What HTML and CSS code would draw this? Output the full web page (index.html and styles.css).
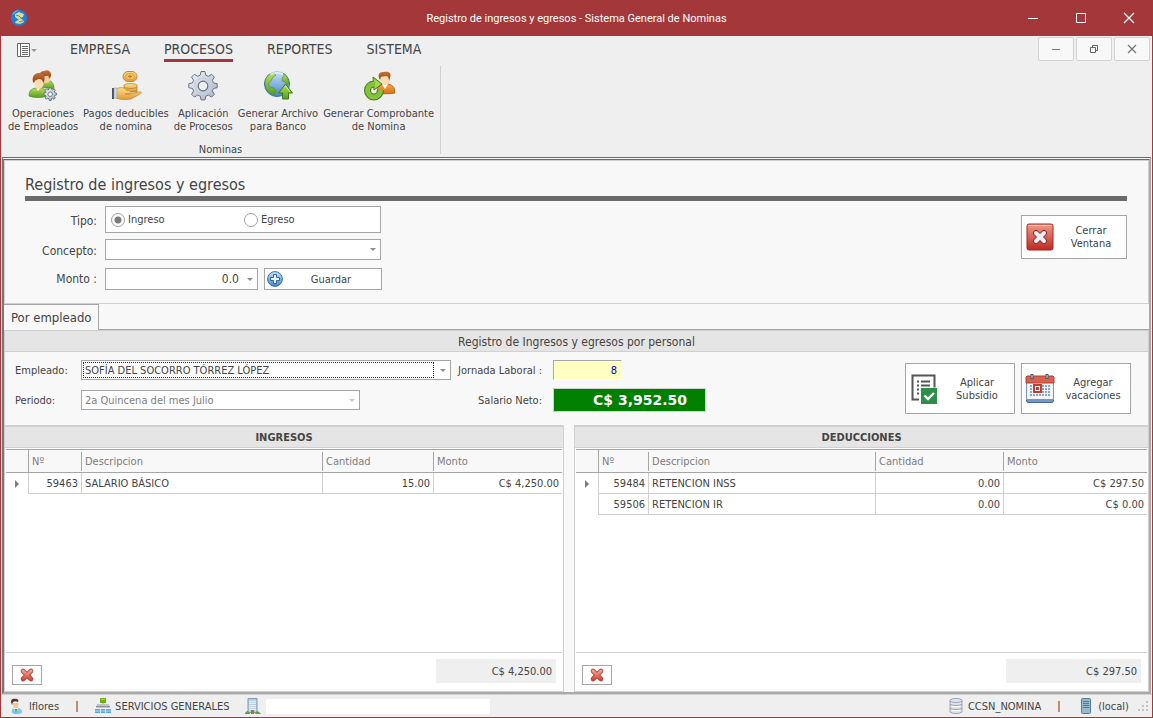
FILE: index.html
```html
<!DOCTYPE html>
<html lang="es">
<head>
    <meta charset="utf-8">
    <title>Registro de ingresos y egresos - Sistema General de Nominas</title>
    <link rel="stylesheet" href="styles.css">
</head>
<body>
    <svg class="defs" width="0" height="0" aria-hidden="true">
        <defs>
            <linearGradient id="gBlue" x1="0" y1="0" x2="0" y2="1"><stop offset="0" stop-color="#c6e3f8"/><stop offset="1" stop-color="#4585c8"/></linearGradient>
            <linearGradient id="gGreen" x1="0" y1="0" x2="0" y2="1"><stop offset="0" stop-color="#b9de62"/><stop offset="1" stop-color="#559f20"/></linearGradient>
            <linearGradient id="gGold" x1="0" y1="0" x2="0" y2="1"><stop offset="0" stop-color="#fde08a"/><stop offset="1" stop-color="#dd9a3a"/></linearGradient>
            <linearGradient id="gSteel" x1="0" y1="0" x2="1" y2="1"><stop offset="0" stop-color="#f2f5f9"/><stop offset="1" stop-color="#a2afc1"/></linearGradient>
            <linearGradient id="gRed" x1="0" y1="0" x2="0" y2="1"><stop offset="0" stop-color="#f09a88"/><stop offset="1" stop-color="#bd2a23"/></linearGradient>
            <linearGradient id="gHair" x1="0" y1="0" x2="0" y2="1"><stop offset="0" stop-color="#c9703a"/><stop offset="1" stop-color="#8a4215"/></linearGradient>
            <linearGradient id="gOrange" x1="0" y1="0" x2="0" y2="1"><stop offset="0" stop-color="#f9a545"/><stop offset="1" stop-color="#d8701a"/></linearGradient>
            <linearGradient id="gCross" gradientUnits="userSpaceOnUse" x1="0" y1="2" x2="0" y2="14"><stop offset="0" stop-color="#f7b3a2"/><stop offset="1" stop-color="#d23b2c"/></linearGradient>
            <path id="gear" d="M14 1.500h4l.8 3.700 2.600 1.100 3.200-2 2.800 2.800-2 3.200 1.100 2.600 3.700.8v4l-3.700.8-1.100 2.600 2 3.200-2.800 2.800-3.200-2-2.600 1.100-.8 3.700h-4l-.8-3.700-2.600-1.100-3.200 2-2.800-2.800 2-3.200-1.100-2.600-3.700-.8v-4l3.700-.8 1.100-2.600-2-3.200 2.800-2.800 3.200 2 2.600-1.100z"/>
            <symbol id="cross" viewBox="0 0 16 16"><path d="M4 4l8 8M12 4l-8 8" stroke="#b3403a" stroke-width="4.600" stroke-linecap="round"/><path d="M4 4l8 8M12 4l-8 8" stroke="url(#gCross)" stroke-width="3" stroke-linecap="round"/></symbol>
        </defs>
    </svg>

    <div class="window">
        <header class="titlebar">
            <svg class="app-icon" width="16" height="16" viewBox="0 0 16 16">
                <circle cx="8" cy="8" r="8" fill="#1c7fdc"/>
                <path d="M1 5a8 8 0 0 1 8-5c-3 1-5 2-6 4z" fill="#56bdf5"/>
                <path d="M4 4l4-2 5 2-1 3-3 1 3 2 1 2-4 2-5-1 1-2 3-1-4-3z" fill="#d8d99a"/>
                <path d="M5 5l3 1 2 2M8 12l4-1" stroke="#5d9a66" fill="none"/>
            </svg>
            <h1 class="caption">Registro de ingresos y egresos - Sistema General de Nominas</h1>
            <div class="window-buttons">
                <button type="button" aria-label="Minimizar"><svg width="12" height="12" viewBox="0 0 12 12"><path d="M1 6.500h10" stroke="#fff"/></svg></button>
                <button type="button" aria-label="Maximizar"><svg width="12" height="12" viewBox="0 0 12 12"><path d="M1.500 1.500h9v9h-9z" fill="none" stroke="#fff"/></svg></button>
                <button type="button" aria-label="Cerrar"><svg width="12" height="12" viewBox="0 0 12 12"><path d="M1 1l10 10M11 1L1 11" stroke="#fff" stroke-width="1.300"/></svg></button>
            </div>
        </header>

        <nav class="ribbon">
            <div class="ribbon-top">
                <button type="button" class="file-menu" aria-label="Menu">
                    <svg width="20" height="14" viewBox="0 0 20 14"><path d="M.5.500h12v13H.5zM3.500.500v13" fill="#fff" stroke="#666"/><path d="M5 3.500h6M5 5.500h6M5 7.500h6M5 9.500h6M5 11.500h6" stroke="#666"/><path d="M14 6h6l-3 3z" fill="#999"/></svg>
                </button>
                <div class="ribbon-tabs">
                    <button type="button">EMPRESA</button>
                    <button type="button" class="active">PROCESOS</button>
                    <button type="button">REPORTES</button>
                    <button type="button">SISTEMA</button>
                </div>
                <div class="child-buttons">
                    <button type="button" aria-label="Minimizar ventana"><svg width="10" height="10" viewBox="0 0 10 10"><path d="M1 5.500h8" stroke="#777"/></svg></button>
                    <button type="button" aria-label="Restaurar ventana"><svg width="10" height="10" viewBox="0 0 10 10"><path d="M1.500 3.500h5v5h-5zM3.500 3.500v-2h5v5h-2" fill="none" stroke="#666"/></svg></button>
                    <button type="button" aria-label="Cerrar ventana hija"><svg width="10" height="10" viewBox="0 0 10 10"><path d="M1 1l8 8M9 1L1 9" stroke="#777" stroke-width="1.300"/></svg></button>
                </div>
            </div>
            <div class="ribbon-group">
                <div class="ribbon-items">
                    <button type="button">
                        <svg width="32" height="32" viewBox="0 0 32 32">
                            <path d="M12 17c1-5 4-7 8-7s7 3 7 9z" fill="url(#gGreen)" stroke="#4a7d1c" stroke-width=".6"/>
                            <path d="M14 5c0 6 2 8 5 8s5-3 5-8z" fill="#f6cf9c"/>
                            <path d="M13 6c-1-4 2-5 4-5 4-2 8 1 7 5l-2 3c0-3-1-4-3-3-3 1-4 0-6 0z" fill="url(#gHair)"/>
                            <path d="M2 26c0-6 3-8 9-8s9 2 9 8c-5 2-13 2-18 0z" fill="url(#gGreen)" stroke="#4a7d1c" stroke-width=".6"/>
                            <path d="M9 17l2 4 3-4z" fill="#fff"/>
                            <path d="M7 10c0 6 2 9 5 9s5-3 5-9z" fill="#fbdcb0"/>
                            <path d="M6 12c-1-4 0-8 5-9 5 0 8 2 6 9l-1 1c0-3-2-4-4-4-3 1-4 1-5 4z" fill="url(#gHair)"/>
                            <g transform="translate(16 17) scale(.45)"><use href="#gear" fill="url(#gSteel)" stroke="#5f6b7e" stroke-width="2"/><circle cx="16" cy="16" r="5" fill="#fff" stroke="#5f6b7e" stroke-width="2"/></g>
                        </svg>
                        <span>Operaciones<br>de Empleados</span>
                    </button>
                    <button type="button">
                        <svg width="32" height="32" viewBox="0 0 32 32">
                            <path d="M14 22h13v-7c-3-2-10-2-13 0z" fill="url(#gGold)" stroke="#c4862e" stroke-width=".8"/>
                            <path d="M14 17c3 2 10 2 13 0M14 20c3 2 10 2 13 0" fill="none" stroke="#c4862e"/>
                            <rect x="13" y="1.500" width="14" height="10" rx="5" fill="url(#gGold)" stroke="#c98a31"/>
                            <rect x="15.500" y="3.500" width="9" height="6" rx="3" fill="#f1bc5c" stroke="#d59c42" stroke-width=".8"/>
                            <path d="M18 6.500h4M20 5v3" stroke="#b97c26"/>
                            <path d="M6 19c4-2 8-2 10 1l4 1c2 1 1 3-1 3h-4l6 0 8-2c3-.5 3 1 1 2l-9 5c-5 1-10 1-15-1z" fill="url(#gGold)" stroke="#c98b3b" stroke-width=".8"/>
                            <path d="M2 18h2v11H2z" fill="#4b5058"/><path d="M4 18h3v10H4z" fill="#d4dae3" stroke="#8f98a6" stroke-width=".6"/>
                        </svg>
                        <span>Pagos deducibles<br>de nomina</span>
                    </button>
                    <button type="button">
                        <svg width="32" height="32" viewBox="0 0 32 32"><use href="#gear" fill="url(#gSteel)" stroke="#66738a"/><circle cx="16" cy="16" r="8" fill="none" stroke="#c7d0dc" stroke-width="1.500"/><circle cx="16" cy="16" r="4.800" fill="#efefef" stroke="#66738a" stroke-width="1.200"/></svg>
                        <span>Aplicación<br>de Procesos</span>
                    </button>
                    <button type="button">
                        <svg width="32" height="32" viewBox="0 0 32 32">
                            <circle cx="15" cy="14" r="12.500" fill="url(#gBlue)" stroke="#3570a8"/>
                            <path d="M3 12c1-5 4-9 9-9l2 2-3 2-2 4-3 3 2 3 4 1 2 3-2 4c-6-2-9-7-9-13z" fill="url(#gGreen)" stroke="#568f29" stroke-width=".6"/>
                            <path d="M22 4c3 2 5 6 5 10l-2 1-2-3-3-1v-3l2-2z" fill="url(#gGreen)" stroke="#568f29" stroke-width=".6"/>
                            <path d="M8 4c4-2 9-3 13 0" stroke="#fff" stroke-width="3" fill="none" opacity=".6"/>
                            <path d="M23.500 14l7 9h-4v6h-6v-6h-4z" fill="url(#gGreen)" stroke="#3b7d18"/>
                            <path d="M23.500 16l4.500 6" stroke="#d8f0a0" fill="none"/>
                        </svg>
                        <span>Generar Archivo<br>para Banco</span>
                    </button>
                    <button type="button">
                        <svg width="32" height="32" viewBox="0 0 32 32">
                            <path d="M14 23c0-6 3-9 9-9s9 3 9 9c-5 1-13 1-18 0z" fill="url(#gOrange)" stroke="#a95113" stroke-width=".8"/>
                            <path d="M19 14l3 5 3-5z" fill="#fff"/>
                            <path d="M17 6c0 6 2 9 5 9s5-3 5-9z" fill="#fbdcb0"/>
                            <path d="M16 8c-1-4 0-6 5-6 5-1 8 1 6 6l-1 3c0-3-1-5-3-5-3 1-4 0-5 1l-1 3z" fill="url(#gHair)"/>
                            <path d="M11 14a6.500 6.500 0 1 0 6.500 6.500" fill="none" stroke="#3d7c19" stroke-width="7"/>
                            <path d="M10 7l9 7-8 6z" fill="#a4d350" stroke="#3d7c19"/>
                            <path d="M12 14a6.500 6.500 0 1 0 5.500 6" fill="none" stroke="#86c23c" stroke-width="5"/>
                        </svg>
                        <span>Generar Comprobante<br>de Nomina</span>
                    </button>
                </div>
                <div class="group-name">Nominas</div>
            </div>
        </nav>

        <main class="child">
            <form class="entry">
                <h2>Registro de ingresos y egresos</h2>
                <div class="entry-body">
                    <div class="entry-fields">
                        <span class="entry-label" id="tipo">Tipo:</span>
                        <div class="radio-box" role="radiogroup" aria-labelledby="tipo">
                            <label><input type="radio" name="tipo" checked>Ingreso</label>
                            <label><input type="radio" name="tipo">Egreso</label>
                        </div>
                        <label class="entry-label" for="concepto">Concepto:</label>
                        <div class="combo">
                            <select id="concepto"><option></option></select>
                            <span class="arrow"></span>
                        </div>
                        <label class="entry-label" for="monto">Monto :</label>
                        <div class="amount-row">
                            <div class="combo amount">
                                <input type="text" id="monto" value="0.0">
                                <span class="arrow"></span>
                            </div>
                            <button type="button" class="btn save">
                                <svg width="16" height="16" viewBox="0 0 16 16"><circle cx="8" cy="8" r="7.400" fill="url(#gBlue)" stroke="#3a6fad"/><path d="M6.500 3.500h3v3h3v3h-3v3h-3v-3h-3v-3h3z" fill="#eaf4fc" stroke="#2e66a8"/></svg>
                                <span>Guardar</span>
                            </button>
                        </div>
                    </div>
                    <button type="button" class="btn close-btn">
                        <svg width="28" height="28" viewBox="0 0 28 28"><rect x="1" y="1" width="26" height="26" rx="2" fill="url(#gRed)" stroke="#a9241f"/><path d="M2.500 2.500h23" stroke="#f7c5ba"/><path d="M10 10l8 8M18 10l-8 8" stroke="#96302e" stroke-width="6" stroke-linecap="round"/><path d="M10 10l8 8M18 10l-8 8" stroke="#e9eef8" stroke-width="4" stroke-linecap="round"/></svg>
                        <span>Cerrar<br>Ventana</span>
                    </button>
                </div>
            </form>

            <div class="tabs"><button type="button" class="tab">Por empleado</button></div>

            <section class="page">
                <h3 class="page-title">Registro de Ingresos y egresos por personal</h3>
                <div class="employee">
                    <div class="employee-fields">
                        <label for="empleado">Empleado:</label>
                        <div class="combo focused">
                            <select id="empleado"><option>SOFÍA DEL SOCORRO TÓRREZ LÓPEZ</option></select>
                            <span class="arrow"></span>
                        </div>
                        <label class="right" for="jornada">Jornada Laboral :</label>
                        <input type="text" class="hours" id="jornada" value="8">
                        <label for="periodo">Periodo:</label>
                        <div class="combo disabled">
                            <select id="periodo" disabled><option>2a Quincena del mes Julio</option></select>
                            <span class="arrow"></span>
                        </div>
                        <label class="right" for="neto">Salario Neto:</label>
                        <input type="text" class="net" id="neto" value="C$ 3,952.50" readonly>
                    </div>
                    <div class="employee-actions">
                        <button type="button" class="btn">
                            <svg width="30" height="32" viewBox="0 0 30 32"><path d="M10 26.500H3.500v-24h22v12" fill="none" stroke="#555" stroke-width="2"/><path d="M8 8.500h2M8 12.500h2M8 16.500h2M8 20.500h2M12 8.500h9M12 12.500h9M12 16.500h3" stroke="#555" stroke-width="2"/><path d="M12 15h16v16H12z" fill="#2e8f48"/><path d="M15.500 22.500l3.500 3.500 6-6" fill="none" stroke="#fff" stroke-width="2.400"/></svg>
                            <span>Aplicar<br>Subsidio</span>
                        </button>
                        <button type="button" class="btn">
                            <svg width="30" height="32" viewBox="0 0 30 32">
                                <path d="M1.500 26v2l1 1.500h25l1-1.500v-2z" fill="#7896c4" stroke="#4568a3"/>
                                <path d="M1.500 4.500h27v22h-27z" fill="#f3f5fa" stroke="#7a95c4"/>
                                <path d="M1 10V4l1-1h26l1 1v6z" fill="#d9604e" stroke="#ad4234"/>
                                <path d="M7 1v5M22 1v5" stroke="#4f5664" stroke-width="3"/><path d="M7 2v3M22 2v3" stroke="#d4dae6"/>
                                <path d="M5 13h20M5 16h20M5 19h20M5 22h20" stroke="#8fa4cc" stroke-width="2" stroke-dasharray="2 1"/>
                                <path d="M9 12h7v7H9z" fill="#fff" stroke="#c13f30" stroke-width="2"/><path d="M11 14h3v3h-3z" fill="#c13f30"/>
                            </svg>
                            <span>Agregar<br>vacaciones</span>
                        </button>
                    </div>
                </div>

                <div class="split">
                    <section class="panel income">
                        <h4>INGRESOS</h4>
                        <div class="grid-area">
                            <table>
                                <colgroup><col class="c-mark"><col class="c-num"><col><col class="c-qty"><col class="c-amount"></colgroup>
                                <thead>
                                    <tr><th></th><th>Nº</th><th>Descripcion</th><th>Cantidad</th><th>Monto</th></tr>
                                </thead>
                                <tbody>
                                    <tr><td><i class="mark"></i></td><td class="num">59463</td><td>SALARIO BÁSICO</td><td class="num">15.00</td><td class="num">C$ 4,250.00</td></tr>
                                </tbody>
                            </table>
                        </div>
                        <div class="panel-foot">
                            <button type="button" class="btn del" aria-label="Eliminar ingreso"><svg width="16" height="16"><use href="#cross"/></svg></button>
                            <output class="total">C$ 4,250.00</output>
                        </div>
                    </section>
                    <section class="panel deductions">
                        <h4>DEDUCCIONES</h4>
                        <div class="grid-area">
                            <table>
                                <colgroup><col class="c-mark"><col class="c-num"><col><col class="c-qty"><col class="c-amount"></colgroup>
                                <thead>
                                    <tr><th></th><th>Nº</th><th>Descripcion</th><th>Cantidad</th><th>Monto</th></tr>
                                </thead>
                                <tbody>
                                    <tr><td><i class="mark"></i></td><td class="num">59484</td><td>RETENCION INSS</td><td class="num">0.00</td><td class="num">C$ 297.50</td></tr>
                                    <tr><td></td><td class="num">59506</td><td>RETENCION IR</td><td class="num">0.00</td><td class="num">C$ 0.00</td></tr>
                                </tbody>
                            </table>
                        </div>
                        <div class="panel-foot">
                            <button type="button" class="btn del" aria-label="Eliminar deduccion"><svg width="16" height="16"><use href="#cross"/></svg></button>
                            <output class="total">C$ 297.50</output>
                        </div>
                    </section>
                </div>
            </section>
        </main>

        <footer class="statusbar">
            <svg width="16" height="16" viewBox="0 0 16 16"><path d="M4 5c0 4 1 5 3 5s3-2 2-5z" fill="#f4c896"/><path d="M2 4c0-3 2-4 4-3 3-1 4 2 3 3-2-1-3-1-5 0l-1 3z" fill="#5a3418"/><path d="M3 15c-1-4 1-5 4-5 4 0 6 1 6 5-3 1.500-8 1.500-10 0z" fill="#7cc8f0"/><path d="M5 10l2 5 2-5z" fill="#fff"/><path d="M6 11h2l-1 5z" fill="#2c8f3c"/></svg>
            <span class="user">lflores</span>
            <span class="divider"></span>
            <svg width="16" height="16" viewBox="0 0 16 16"><path d="M5 0h6v5H5z" fill="#6fae12"/><path d="M6 1h4v1H6z" fill="#a9dd3f"/><path d="M8 5v2" stroke="#8b9097"/><path d="M2 6h12l1 4H1z" fill="#c1c4c9"/><path d="M1 8.500h14" stroke="#8b9097"/><path d="M0 11h5v4H0zM6 11h4v4H6zM11 11h5v4h-5z" fill="#4fa9e3"/><path d="M0 13h16" stroke="#b7def6"/></svg>
            <span class="dept">SERVICIOS GENERALES</span>
            <svg width="16" height="16" viewBox="0 0 16 16"><path d="M3 .5h9v14H3z" fill="#b9cfe6" stroke="#8398b0"/><path d="M4 3.500h7M4 5.500h7M4 7.500h7M4 9.500h7M4 11.500h7" stroke="#eaf3fb"/><path d="M6 12h3v4H6z" fill="#a8723a"/><path d="M0 15l2-2 2 1 1 2H0zM10 16l2-3 2 1 2 2z" fill="#5aa02c"/></svg>
            <span class="blank"></span>
            <span class="spacer"></span>
            <svg width="14" height="16" viewBox="0 0 14 16"><path d="M1 2v12c2 2 10 2 12 0V2c-2-2-10-2-12 0z" fill="#dfe3ea" stroke="#9aa3b2"/><path d="M1 3c2 2 10 2 12 0M1 6c2 2 10 2 12 0M1 10c2 2 10 2 12 0" fill="none" stroke="#9aa3b2"/><path d="M3 8.500h8M3 12.500h8" stroke="#fff"/></svg>
            <span class="db">CCSN_NOMINA</span>
            <span class="divider"></span>
            <svg class="server-icon" width="10" height="16" viewBox="0 0 10 16"><rect x=".5" y=".5" width="9" height="15" rx="1" fill="#98b8cd" stroke="#567a93"/><path d="M2 3.500h6M2 5.500h6M2 7.500h6M2 9.500h6" stroke="#527892"/></svg>
            <span>(local)</span>
            <svg class="grip" width="12" height="12" viewBox="0 0 12 12"><path d="M8 0h2v2H8zM4 4h2v2H4zM8 4h2v2H8zM0 8h2v2H0zM4 8h2v2H4zM8 8h2v2H8z" fill="#c3c3c3"/></svg>
        </footer>
    </div>
</body>
</html>
```

FILE: styles.css
```css
* {
  box-sizing: border-box;
}
body {
  margin: 0;
  font-family: "DejaVu Sans Condensed", "Noto Sans", sans-serif;
  font-size: 11px;
  line-height: 13px;
  color: #444;
}
button,
input,
select {
  font: inherit;
  color: inherit;
}
h1, h2, h3, h4 {
  margin: 0;
  font-weight: normal;
}
svg {
  display: block;
  flex: none;
}
.defs {
  position: absolute;
}
.window {
  display: flex;
  flex-direction: column;
  min-height: 100vh;
  border: 1px solid #a4373a;
  border-top: none;
  background: #efefef;
}

/* title bar */
.titlebar {
  display: grid;
  grid-template-columns: 143px 1fr 143px;
  align-items: center;
  height: 36px;
  background: #a4373a;
  color: #fff;
}
.app-icon {
  margin-left: 10px;
}
.caption {
  text-align: center;
  font-family: Roboto, sans-serif;
  font-size: 11px;
}
.window-buttons {
  display: flex;
}
.window-buttons button {
  display: flex;
  flex: none;
  align-items: center;
  justify-content: center;
  width: 48px;
  height: 36px;
  padding: 0;
  border: none;
  background: none;
}

/* ribbon */
.ribbon {
  height: 121px;
}
.ribbon-top {
  display: flex;
  height: 30px;
}
.file-menu {
  width: 53px;
  padding: 0 0 2px 16px;
  border: none;
  background: none;
}
.ribbon-tabs {
  display: flex;
  flex: 1;
  gap: 34px;
  padding-left: 16px;
}
.ribbon-tabs button {
  height: 26px;
  padding: 4px 0 0;
  border: none;
  border-bottom: 3px solid transparent;
  background: none;
  font-size: 14px;
}
.ribbon-tabs .active {
  border-bottom-color: #a4373a;
}
.child-buttons {
  display: flex;
  gap: 2px;
  padding: 1px 2px 0 0;
}
.child-buttons button {
  display: flex;
  align-items: center;
  justify-content: center;
  width: 36px;
  height: 24px;
  padding: 0;
  border: 1px solid #d2d2d2;
  border-radius: 2px;
  background: #f8f8f8;
}
.ribbon-group {
  width: max-content;
  height: 88px;
  border-right: 1px solid #d0d0d0;
}
.ribbon-items {
  display: flex;
  gap: 5px;
  padding: 4px 6px 0 7px;
}
.ribbon-items button {
  display: flex;
  flex-direction: column;
  align-items: center;
  gap: 5px;
  height: 73px;
  padding: 0;
  border: none;
  background: none;
}
.group-name {
  text-align: center;
}

/* child window */
.child {
  display: flex;
  flex: 1;
  flex-direction: column;
  margin: 0 1px;
  border: 2px solid #aaa;
  border-top: 3px double #6a6a6a;
  border-left: 2px solid #777;
  background: #f8f8f8;
}
.entry {
  height: 144px;
  padding: 16px 21px 0 20px;
  border: 1px solid #d0d0d0;
}
.entry h2 {
  padding-bottom: 3px;
  border-bottom: 5px solid #6a6a6a;
  font-size: 16px;
  line-height: 16px;
}
.entry-body {
  display: flex;
  align-items: flex-start;
  justify-content: space-between;
  padding-top: 5px;
}
.entry-fields {
  display: grid;
  grid-template-columns: 72px 277px;
  column-gap: 8px;
  row-gap: 6px;
  align-items: center;
}
.entry-label {
  padding-top: 3px;
  text-align: right;
  font-size: 12px;
}
.radio-box {
  display: flex;
  align-items: center;
  height: 27px;
  margin-right: 1px;
  padding-left: 5px;
  border: 1px solid #a5a5a5;
  background: #fff;
}
.radio-box label {
  display: flex;
  align-items: center;
  gap: 3px;
  width: 133px;
}
.radio-box input {
  appearance: none;
  width: 14px;
  height: 14px;
  margin: 0;
  border: 1px solid #a0a0a0;
  border-radius: 50%;
  background: #fff;
}
.radio-box input:checked {
  background: radial-gradient(circle, #7a7a7a 3px, #fff 4px);
}
.combo {
  display: flex;
  height: 21px;
  margin-right: 1px;
  border: 1px solid #a5a5a5;
  background: #fff;
}
.combo select,
.combo input {
  flex: 1;
  appearance: none;
  min-width: 0;
  padding: 0 3px;
  border: none;
  outline: none;
  background: none;
}
.arrow {
  align-self: center;
  width: 6px;
  margin: 0 4px 0 5px;
  border: 3px solid transparent;
  border-top-color: #8c8c8c;
  border-bottom: none;
}
.amount-row {
  display: flex;
  gap: 6px;
  padding-top: 2px;
}
.amount {
  width: 153px;
  height: 22px;
  margin: 0;
}
.amount input {
  text-align: right;
  font-size: 12px;
}
.btn {
  display: flex;
  align-items: center;
  padding: 0 5px;
  border: 1px solid #a5a5a5;
  background: #fff;
}
.btn span {
  flex: 1;
  text-align: center;
}
.save {
  width: 118px;
  height: 22px;
  padding: 0 2px;
}
.close-btn {
  gap: 6px;
  width: 106px;
  height: 44px;
  margin-top: 9px;
  padding: 0 4px;
}

/* tab page */
.tabs {
  position: relative;
  display: flex;
}
.tab {
  height: 26px;
  margin-bottom: -1px;
  padding: 0 7px;
  border: 1px solid #a5a5a5;
  border-width: 1px 1px 0 0;
  background: #f8f8f8;
  font-size: 13px;
}
.page {
  display: flex;
  flex: 1;
  flex-direction: column;
  border-top: 1px solid #a5a5a5;
}
.page-title,
.panel h4 {
  height: 22px;
  padding-top: 1px;
  border: 1px solid #d0d0d0;
  background: #e5e5e5;
  text-align: center;
  line-height: 20px;
}
.page-title {
  font-size: 12px;
}
.employee {
  display: flex;
  justify-content: space-between;
  height: 73px;
  padding: 8px 17px 0 10px;
  border: 1px solid #d0d0d0;
  border-width: 0 1px;
}
.employee-fields {
  display: grid;
  grid-template-columns: 66px 370px 91px 164px;
  grid-template-rows: 20px 24px;
  row-gap: 8px;
  align-items: center;
}
.employee-fields .combo {
  height: 20px;
  margin: 0;
}
.right {
  text-align: right;
}
.focused select {
  border: 1px dotted #333;
  margin: 1px;
  padding: 0 1px;
}
.disabled {
  width: 279px;
}
.disabled select {
  color: #7d7d7d;
  opacity: 1;
}
.disabled .arrow {
  border-top-color: #c8c8c8;
}
.hours {
  width: 69px;
  height: 20px;
  margin-left: 11px;
  padding: 0 4px;
  border: 1px solid;
  border-color: #a5a5a5 #fff #fff #a5a5a5;
  background: #ffffc0;
  color: #0000c0;
  text-align: right;
}
.net {
  width: 153px;
  height: 24px;
  margin-left: 11px;
  padding: 0 18px;
  border: 1px solid #d0d0d0;
  background: #008000;
  color: #fff;
  font-family: "DejaVu Sans", sans-serif;
  font-size: 14px;
  font-weight: bold;
  text-align: right;
}
.employee-actions {
  display: flex;
  gap: 6px;
  padding-top: 3px;
}
.employee-actions .btn {
  gap: 4px;
  width: 110px;
  height: 51px;
  padding: 0 3px;
}

/* grids */
.split {
  display: flex;
  flex: 1;
  gap: 10px;
}
.panel {
  display: flex;
  flex-direction: column;
  min-width: 0;
  border: 1px solid #d0d0d0;
  background: #fff;
}
.income {
  flex: 560;
}
.deductions {
  flex: 575;
}
.panel h4 {
  border-width: 1px 0;
  font-weight: bold;
}
.grid-area {
  flex: 1;
  margin: 1px 1px 0;
  border-bottom: 1px solid #d0d0d0;
}
table {
  width: 100%;
  border-spacing: 0;
  table-layout: fixed;
}
.c-mark {
  width: 23px;
}
.c-num {
  width: 53px;
}
.c-qty {
  width: 111px;
}
.c-amount {
  width: 128px;
}
.deductions .c-num {
  width: 50px;
}
.deductions .c-qty {
  width: 128px;
}
.deductions .c-amount {
  width: 143px;
}
th {
  height: 24px;
  padding: 0 3px;
  border-top: 1px solid #a5a5a5;
  border-bottom: 1px solid #a5a5a5;
  background: linear-gradient(#a5a5a5, #a5a5a5) right center / 1px 19px no-repeat #f8f8f8;
  color: #7d7d7d;
  font-weight: normal;
  text-align: left;
}
th:first-child {
  background-size: 1px 100%;
}
th:last-child {
  background: #f8f8f8;
}
td {
  height: 21px;
  padding: 0 3px;
  border-right: 1px solid #d0d0d0;
  border-bottom: 1px solid #d0d0d0;
}
td:first-child {
  border-bottom: none;
}
td:last-child {
  border-right: none;
}
.num {
  text-align: right;
}
.mark {
  display: block;
  width: 0;
  margin-left: 6px;
  border: 4px solid transparent;
  border-left-color: #7d7d7d;
  border-right: none;
}
.panel-foot {
  display: flex;
  align-items: flex-start;
  justify-content: space-between;
  height: 38px;
  padding: 6px 7px 0;
}
.del {
  justify-content: center;
  width: 30px;
  height: 20px;
  margin-top: 6px;
  padding: 0;
}
.total {
  width: 120px;
  padding: 6px 4px 5px;
  background: #efefef;
  text-align: right;
}
.deductions .total {
  width: 135px;
}

/* status bar */
.statusbar {
  display: flex;
  align-items: center;
  height: 23px;
  padding: 0 0 0 8px;
  border-top: 1px solid #d0d0d0;
}
.user {
  margin-left: 4px;
}
.divider {
  width: 2px;
  height: 11px;
  margin: 0 17px;
  background: #c29068;
}
.dept {
  margin: 0 16px 0 4px;
}
.blank {
  width: 224px;
  height: 15px;
  margin-left: 5px;
  background: #fff;
}
.spacer {
  flex: 1;
}
.db {
  margin-left: 5px;
}
.server-icon {
  margin: 0 7px 0 4px;
}
.grip {
  align-self: flex-end;
  margin: 0 2px 4px 9px;
}
```
